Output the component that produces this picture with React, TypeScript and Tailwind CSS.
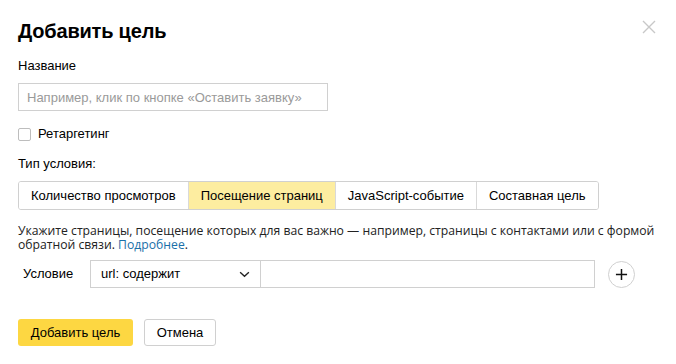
import { useState } from 'react';

const TABS = [
  'Количество просмотров',
  'Посещение страниц',
  'JavaScript-событие',
  'Составная цель',
] as const;

export default function App() {
  const [tab, setTab] = useState<string>('Посещение страниц');
  const [retarget, setRetarget] = useState(false);

  return (
    <div
      className="relative w-[676px] h-[364px] bg-white text-[#000] overflow-hidden"
      style={{ fontFamily: '"Liberation Sans", Arial, sans-serif' }}
    >
      <button className="absolute left-[642px] top-[20px] w-[14px] h-[14px]" aria-label="Закрыть">
        <svg viewBox="0 0 14 14" width="14" height="14">
          <path d="M1 1L13 13M13 1L1 13" stroke="#c8c8c8" strokeWidth="1.4" />
        </svg>
      </button>

      <div className="pl-[18px] pt-[18px]">
        <h1 className="text-[20px] leading-[26px] font-bold tracking-[-0.2px]">Добавить цель</h1>

        <div className="mt-[14px] text-[13px] leading-[16px]">Название</div>
        <input
          className="mt-[9px] block w-[310px] h-[28px] border border-[#d0d0d0] px-[8px] text-[13px] outline-none placeholder:text-[#9a9a9a]"
          placeholder="Например, клик по кнопке «Оставить заявку»"
        />

        <label className="mt-[15px] flex items-center gap-[7px] text-[13px] leading-[16px] cursor-pointer">
          <span
            onClick={() => setRetarget(!retarget)}
            className={`w-[13px] h-[13px] rounded-[2px] border border-[#bdbdbd] ${retarget ? 'bg-[#ffdb4d]' : 'bg-white'}`}
          />
          Ретаргетинг
        </label>

        <div className="mt-[14px] text-[13px] leading-[16px]">Тип условия:</div>

        <div className="mt-[9px] flex w-max border border-[#d0d0d0] rounded-[3px] overflow-hidden">
          {TABS.map((t, i) => (
            <button
              key={t}
              onClick={() => setTab(t)}
              className={`h-[27px] px-[12px] text-[13px] ${i > 0 ? 'border-l border-[#d9d9d9]' : ''} ${
                tab === t ? 'bg-[#fdeda0]' : 'bg-white'
              }`}
            >
              {t}
            </button>
          ))}
        </div>

        <p
          className="mt-[14px] w-[645px] text-[12.2px] leading-[14px] text-[#222]"
          style={{ fontFamily: '"Open Sans", sans-serif' }}
        >
          Укажите страницы, посещение которых для вас важно — например, страницы с контактами или с формой обратной связи.{' '}
          <a className="text-[#1a6fa8]">Подробнее</a>.
        </p>

        <div className="mt-[8px] flex items-center">
          <span className="w-[72px] pl-[5px] text-[13px]">Условие</span>
          <div className="flex h-[28px] border border-[#d0d0d0]">
            <div className="w-[170px] flex items-center justify-between pl-[10px] pr-[10px] border-r border-[#d0d0d0] text-[13px]">
              url: содержит
              <svg viewBox="0 0 12 8" width="11" height="7">
                <path d="M1 1.5L6 6L11 1.5" stroke="#222" strokeWidth="1.6" fill="none" />
              </svg>
            </div>
            <input className="w-[333px] outline-none px-[8px] text-[13px]" />
          </div>
          <button
            className="ml-[13px] w-[27px] h-[27px] rounded-full border border-[#d0d0d0] flex items-center justify-center"
            aria-label="Добавить"
          >
            <svg viewBox="0 0 14 14" width="13" height="13">
              <path d="M7 1V13M1 7H13" stroke="#111" strokeWidth="1.6" />
            </svg>
          </button>
        </div>

        <div className="mt-[31px] flex gap-[11px]">
          <button className="h-[27px] w-[115px] rounded-[3px] bg-[#fdd742] text-[13px]">Добавить цель</button>
          <button className="h-[27px] w-[72px] rounded-[3px] border border-[#d0d0d0] bg-white text-[13px]">Отмена</button>
        </div>
      </div>
    </div>
  );
}
